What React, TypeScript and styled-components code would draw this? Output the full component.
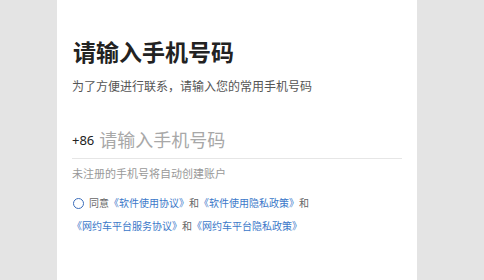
import styled, { createGlobalStyle } from 'styled-components';

const GlobalStyle = createGlobalStyle`
 html, body {
  margin: 0;
  padding: 0;
  background: #e4e4e4;
  font-family: 'Noto Sans', 'Noto Sans CJK SC', sans-serif;
 }
`;

const Page = styled.div`
 display: flex;
 padding-left: 57px;
 height: 280px;
 overflow: hidden;
 background: #e4e4e4;
`;

const Panel = styled.div`
 width: 360px;
 box-sizing: border-box;
 background: #fff;
 padding: 36px 15px 0 15px;
`;

const Title = styled.h1`
 margin: 0;
 font-size: 23px;
 line-height: 32px;
 font-weight: 700;
 color: #222;
 padding-left: 1px;
`;

const Subtitle = styled.p`
 margin: 10px 0 0 0;
 font-size: 12px;
 line-height: 18px;
 color: #555;
`;

const PhoneRow = styled.div`
 display: flex;
 align-items: center;
 height: 36px;
 margin-top: 26px;
 border-bottom: 1px solid #e6e6e6;
 & .code {
  font-size: 13px;
  color: #222;
  margin-right: 5px;
 }
`;

const PhoneInput = styled.input`
 flex: 1;
 border: none;
 outline: none;
 padding: 0;
 font-family: inherit;
 font-size: 18px;
 color: #222;
 background: transparent;
 &::placeholder {
  color: #a8a8a8;
 }
`;

const Hint = styled.div`
 margin-top: 7px;
 font-size: 11px;
 line-height: 16px;
 color: #999;
`;

const Agreement = styled.div`
 margin-top: 10px;
 font-size: 10px;
 line-height: 23px;
 color: #666;
`;

const Radio = styled.span`
 display: inline-block;
 box-sizing: border-box;
 width: 11px;
 height: 11px;
 border: 1.5px solid #3a6cba;
 border-radius: 50%;
 vertical-align: -2px;
 margin: 0 5px 0 1px;
`;

const Link = styled.a`
 color: #3b78c9;
 text-decoration: none;
`;

export default function App() {
 return (
  <>
   <GlobalStyle />
   <Page>
    <Panel>
     <Title>请输入手机号码</Title>
     <Subtitle>为了方便进行联系，请输入您的常用手机号码</Subtitle>
     <PhoneRow>
      <span className='code'>+86</span>
      <PhoneInput placeholder='请输入手机号码' />
     </PhoneRow>
     <Hint>未注册的手机号将自动创建账户</Hint>
     <Agreement>
      <Radio />
      同意<Link>《软件使用协议》</Link>和<Link>《软件使用隐私政策》</Link>和
      <br />
      <Link>《网约车平台服务协议》</Link>和<Link>《网约车平台隐私政策》</Link>
     </Agreement>
    </Panel>
   </Page>
  </>
 );
}
